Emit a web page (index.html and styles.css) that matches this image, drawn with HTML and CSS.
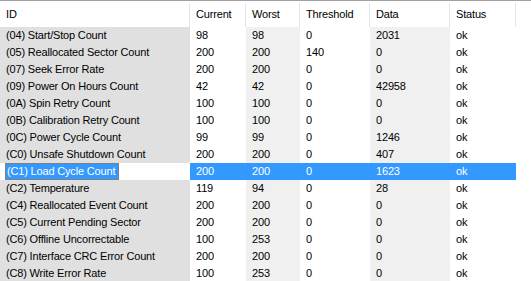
FILE: index.html
```html
<!DOCTYPE html>
<html>
<head>
<meta charset="utf-8">
<link rel="stylesheet" href="styles.css">
</head>
<body>
<div class="listview">
  <table class="grid">
    <colgroup>
      <col class="w-id"><col class="w-cur"><col class="w-worst"><col class="w-thr"><col class="w-data"><col class="w-status"><col class="w-fill">
    </colgroup>
    <thead>
      <tr>
        <th>ID</th><th>Current</th><th>Worst</th><th>Threshold</th><th>Data</th><th>Status</th><th class="fill"></th>
      </tr>
    </thead>
    <tbody>
      <tr><td class="c-id">(04) Start/Stop Count</td><td>98</td><td class="alt">98</td><td>0</td><td class="alt">2031</td><td>ok</td><td></td></tr>
      <tr><td class="c-id">(05) Reallocated Sector Count</td><td>200</td><td class="alt">200</td><td>140</td><td class="alt">0</td><td>ok</td><td></td></tr>
      <tr><td class="c-id">(07) Seek Error Rate</td><td>200</td><td class="alt">200</td><td>0</td><td class="alt">0</td><td>ok</td><td></td></tr>
      <tr><td class="c-id">(09) Power On Hours Count</td><td>42</td><td class="alt">42</td><td>0</td><td class="alt">42958</td><td>ok</td><td></td></tr>
      <tr><td class="c-id">(0A) Spin Retry Count</td><td>100</td><td class="alt">100</td><td>0</td><td class="alt">0</td><td>ok</td><td></td></tr>
      <tr><td class="c-id">(0B) Calibration Retry Count</td><td>100</td><td class="alt">100</td><td>0</td><td class="alt">0</td><td>ok</td><td></td></tr>
      <tr><td class="c-id">(0C) Power Cycle Count</td><td>99</td><td class="alt">99</td><td>0</td><td class="alt">1246</td><td>ok</td><td></td></tr>
      <tr><td class="c-id">(C0) Unsafe Shutdown Count</td><td>200</td><td class="alt">200</td><td>0</td><td class="alt">407</td><td>ok</td><td></td></tr>
      <tr class="selected"><td class="c-id"><span class="focus">(C1) Load Cycle Count</span></td><td>200</td><td class="alt">200</td><td>0</td><td class="alt">1623</td><td>ok</td><td></td></tr>
      <tr><td class="c-id">(C2) Temperature</td><td>119</td><td class="alt">94</td><td>0</td><td class="alt">28</td><td>ok</td><td></td></tr>
      <tr><td class="c-id">(C4) Reallocated Event Count</td><td>200</td><td class="alt">200</td><td>0</td><td class="alt">0</td><td>ok</td><td></td></tr>
      <tr><td class="c-id">(C5) Current Pending Sector</td><td>200</td><td class="alt">200</td><td>0</td><td class="alt">0</td><td>ok</td><td></td></tr>
      <tr><td class="c-id">(C6) Offline Uncorrectable</td><td>100</td><td class="alt">253</td><td>0</td><td class="alt">0</td><td>ok</td><td></td></tr>
      <tr><td class="c-id">(C7) Interface CRC Error Count</td><td>200</td><td class="alt">200</td><td>0</td><td class="alt">0</td><td>ok</td><td></td></tr>
      <tr><td class="c-id">(C8) Write Error Rate</td><td>100</td><td class="alt">253</td><td>0</td><td class="alt">0</td><td>ok</td><td></td></tr>
    </tbody>
  </table>
</div>
</body>
</html>
```
FILE: styles.css
```css
html, body {
  margin: 0;
  padding: 0;
  background: #ffffff;
  overflow: hidden;
}
body {
  width: 531px;
  height: 281px;
  font-family: "Liberation Sans", Arial, sans-serif;
  font-size: 11px;
  letter-spacing: -0.17px;
  color: #000000;
}
.listview {
  border-top: 1px solid #a0a0a0;
}
.grid {
  border-collapse: collapse;
  table-layout: fixed;
  width: 531px;
}
.w-id { width: 190px; }
.w-cur { width: 56px; }
.w-worst { width: 54px; }
.w-thr { width: 70px; }
.w-data { width: 80px; }
.w-status { width: 66px; }
.w-fill { width: 15px; }

.grid th {
  height: 26px;
  padding: 0 0 0 6px;
  font-weight: normal;
  text-align: left;
  vertical-align: middle;
  white-space: nowrap;
  background: #ffffff;
  position: relative;
}
.grid th::after {
  content: "";
  position: absolute;
  right: 0;
  top: 2px;
  bottom: 0;
  width: 1px;
  background: #e5e5e5;
}
.grid th.fill::after { display: none; }

.grid td {
  height: 17px;
  padding: 0 0 0 6px;
  white-space: nowrap;
  overflow: hidden;
  vertical-align: middle;
  line-height: 17px;
}
.grid td.c-id {
  background: #e0e0e0;
  padding-left: 6px;
}
.grid td.alt {
  background: #f0f0f0;
}
.grid tr.selected td {
  background: #3399ff;
  color: #ffffff;
}
.grid tr.selected td:last-child {
  background: #ffffff;
}
.grid tr.selected td.c-id {
  background: #ffffff;
  padding-left: 5px;
}
.focus {
  display: inline-block;
  height: 15px;
  line-height: 15px;
  padding: 0 1px;
  background: #3399ff;
  color: #ffffff;
  border: 1px dotted #cc6600;
  vertical-align: top;
  width: 110px;
}
```
